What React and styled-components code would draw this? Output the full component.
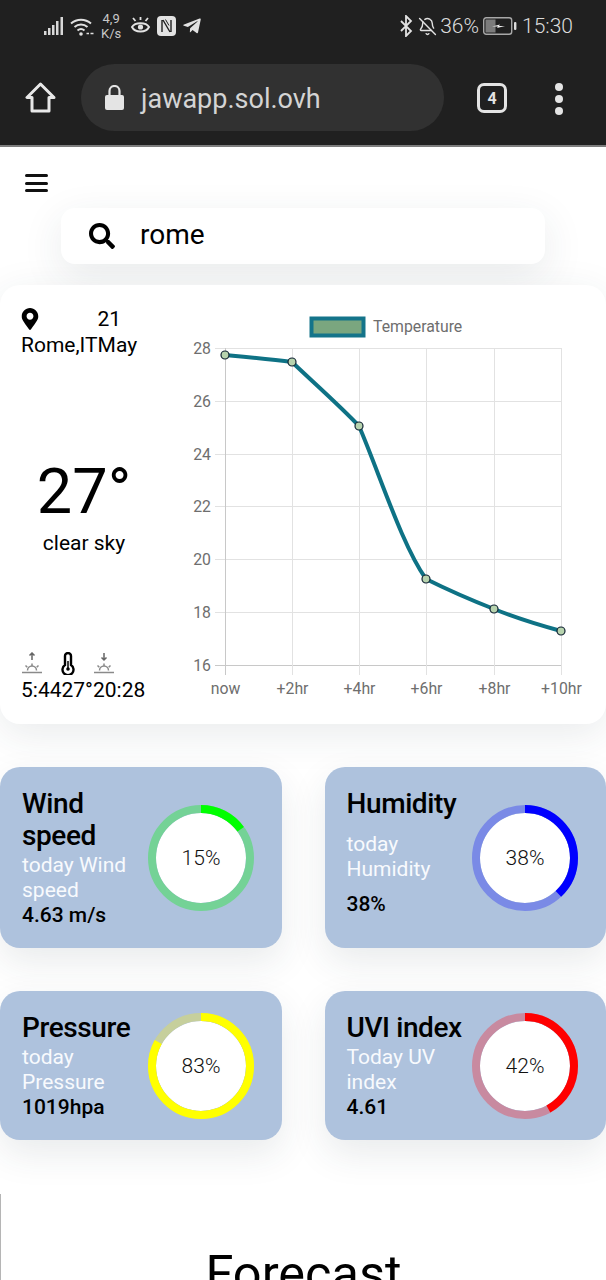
import React from 'react'
import styled, { createGlobalStyle } from 'styled-components'
import { FaSearch, FaMapMarkerAlt, FaTelegramPlane } from 'react-icons/fa'
import { BellOff } from 'lucide-react'

const GlobalStyle = createGlobalStyle`
    html, body {
        margin: 0;
        height: 1280px;
        overflow: hidden;
        background: #fff;
        font-family: Roboto, "Liberation Sans", sans-serif;
        color: #000;
    }
    * { box-sizing: border-box; }
`

const Page = styled.div`
    width: 606px;
    height: 1280px;
    overflow: hidden;
    display: flex;
    flex-direction: column;
`

const BrowserChrome = styled.header`
    height: 147px;
    flex: none;
    background: #202020;
    border-bottom: 2px solid #7d7d7d;
    color: #d6d6d6;
`

const StatusBar = styled.div`
    height: 52px;
    padding: 0 33px 0 44px;
    display: flex;
    align-items: center;
    justify-content: space-between;
`

const StatusGroup = styled.div`
    display: flex;
    align-items: center;
    gap: ${({ $gap }) => $gap || 6}px;
`

const NetSpeed = styled.div`
    font-size: 13px;
    line-height: 15px;
    text-align: center;
    margin: 0 3px 0 1px;
    color: #c8c8c8;
`

const StatusText = styled.span`
    font-size: ${({ $size }) => $size || 21}px;
    font-weight: 300;
    color: #dcdcdc;
    margin: 0 ${({ $right }) => $right || 0}px 0 ${({ $left }) => $left || 0}px;
`

const Toolbar = styled.div`
    height: 93px;
    padding: 12px 0 0 25px;
    display: flex;
    align-items: flex-start;
`

const HomeButton = styled.div`
    width: 31px;
    margin-top: 18px;
    line-height: 0;
`

const UrlPill = styled.div`
    margin-left: 25px;
    width: 363px;
    height: 67px;
    border-radius: 34px;
    background: #313131;
    display: flex;
    align-items: center;
    padding-left: 24px;
    gap: 17px;
    font-size: 27px;
    color: #d4d4d4;
`

const UrlText = styled.span`
    position: relative;
    top: 1px;
`

const TabCount = styled.div`
    margin: 19px 0 0 33px;
    width: 30px;
    height: 30px;
    border: 3px solid #e4e4e4;
    border-radius: 7px;
    display: flex;
    align-items: center;
    justify-content: center;
    font-size: 16px;
    font-weight: 700;
    color: #e4e4e4;
`

const MenuDots = styled.div`
    margin: 19px 0 0 48px;
    display: flex;
    flex-direction: column;
    gap: 4px;
`

const Dot = styled.i`
    display: block;
    width: 8px;
    height: 8px;
    border-radius: 50%;
    background: #e4e4e4;
`

const Burger = styled.div`
    margin: 27px 0 0 25px;
    width: 23px;
    display: flex;
    flex-direction: column;
    gap: 4.5px;
`

const BurgerBar = styled.i`
    display: block;
    height: 3px;
    border-radius: 2px;
    background: #111;
`

const SearchBox = styled.div`
    margin: 16px 0 0 61px;
    width: 484px;
    height: 56px;
    flex: none;
    background: #fff;
    border-radius: 14px;
    box-shadow: 0 12px 40px rgba(40, 60, 70, .1);
    display: flex;
    align-items: center;
    padding-left: 28px;
    gap: 25px;
    font-size: 28px;
`

const SearchText = styled.span`
    padding-bottom: 4px;
`

const WeatherCard = styled.section`
    margin-top: 21px;
    height: 439px;
    flex: none;
    background: #fff;
    border-radius: 20px;
    box-shadow: 0 10px 40px rgba(40, 60, 70, .1);
    display: flex;
`

const Summary = styled.div`
    width: 170px;
    flex: none;
    padding: 21px 0 21px 21px;
    display: flex;
    flex-direction: column;
    justify-content: space-between;
    font-size: 21px;
`

const PlaceRow = styled.div`
    display: flex;
    line-height: 26px;
`

const PlaceCol = styled.div`
    display: flex;
    flex-direction: column;
    align-items: flex-start;
`

const PinSlot = styled.div`
    height: 26px;
    line-height: 0;
    padding-top: 2px;
    margin-left: -2px;
`

const Current = styled.div`
    width: 126px;
    text-align: center;
`

const Degrees = styled.div`
    font-size: 63px;
    line-height: 76px;
`

const Condition = styled.div`
    font-size: 21px;
    line-height: 28px;
    margin-top: -1px;
`

const SunRow = styled.div`
    display: flex;
    align-items: flex-end;
    line-height: 26px;
`

const SunCol = styled.div`
    display: flex;
    flex-direction: column;
    align-items: flex-start;
`

const SunIcon = styled.div`
    height: 25px;
    line-height: 0;
    margin-left: ${({ $left }) => $left || 0}px;
`

const Chart = styled.svg`
    display: block;
    flex: 1;
    height: 439px;
`

const Cards = styled.div`
    margin-top: 43px;
    display: grid;
    grid-template-columns: 282px 1fr;
    column-gap: 42.5px;
    row-gap: 43px;
    flex: none;
`

const StatCard = styled.article`
    background: #aec2dd;
    border-radius: 20px;
    box-shadow: 0 14px 36px rgba(40, 60, 70, .1);
    padding: 21px 28px 20px 22px;
    display: flex;
    align-items: center;
`

const StatText = styled.div`
    flex: 1;
    min-width: 0;
    align-self: stretch;
    display: flex;
    flex-direction: column;
`

const StatTitle = styled.div`
    flex-grow: 1;
    font-size: 28px;
    font-weight: 500;
    line-height: 32px;
    letter-spacing: -.4px;
    margin-bottom: 1px;
`

const StatSub = styled.div`
    flex-grow: 1;
    font-size: 21px;
    line-height: 25px;
    color: #f8fafd;
`

const StatValue = styled.div`
    flex-grow: 1;
    font-size: 21px;
    font-weight: 500;
    line-height: 25px;
`

const Ring = styled.svg`
    display: block;
    flex: none;
`

const RingLabel = styled.text`
    font-size: 21px;
    font-weight: 300;
    fill: #111;
    text-anchor: middle;
    dominant-baseline: central;
`

const Forecast = styled.section`
    margin-top: 54px;
    flex: 1;
    border-left: 1px solid #b5b5b5;
    text-align: center;
    padding-top: 52px;
`

const ForecastTitle = styled.h2`
    margin: 0;
    font-size: 50.5px;
    font-weight: 400;
    line-height: 56px;
`

const AxisLabel = styled.text`
    font-size: 15.8px;
    fill: #6e6e6e;
    text-anchor: ${({ $anchor }) => $anchor || 'middle'};
`

const stats = [
    { title: 'Wind speed', sub: 'today Wind speed', value: '4.63 m/s', pct: 15, color: '#00ff00', track: '#74d296' },
    { title: 'Humidity', sub: 'today Humidity', value: '38%', pct: 38, color: '#0000ff', track: '#7a8ae6' },
    { title: 'Pressure', sub: 'today Pressure', value: '1019hpa', pct: 83, color: '#ffff00', track: '#c6cf9c' },
    { title: 'UVI index', sub: 'Today UV index', value: '4.61', pct: 42, color: '#ff0000', track: '#c88aa0' },
]

const yTicks = [
    { label: 28, y: 348.5 },
    { label: 26, y: 401.5 },
    { label: 24, y: 454.5 },
    { label: 22, y: 506.5 },
    { label: 20, y: 559.5 },
    { label: 18, y: 612.5 },
    { label: 16, y: 665.5 },
]

const xTicks = [
    { label: 'now', x: 225.5 },
    { label: '+2hr', x: 292.5 },
    { label: '+4hr', x: 359.5 },
    { label: '+6hr', x: 426.5 },
    { label: '+8hr', x: 494.5 },
    { label: '+10hr', x: 561.5 },
]

const points = [[225, 355], [292, 362], [359, 426], [426, 579], [494, 609], [561, 631]]

function Donut({ pct, color, track }) {
    const r = 49
    const len = 2 * Math.PI * r
    return (
        <Ring width="106" height="106" viewBox="0 0 106 106">
            <circle cx="53" cy="53" r="45" fill="#fff" />
            <circle cx="53" cy="53" r={r} fill="none" stroke={track} strokeWidth="8" />
            <circle
                cx="53"
                cy="53"
                r={r}
                fill="none"
                stroke={color}
                strokeWidth="8"
                strokeDasharray={`${(len * pct) / 100} ${len}`}
                transform="rotate(-90 53 53)"
            />
            <RingLabel x="53" y="53">{pct}%</RingLabel>
        </Ring>
    )
}

function SunIconSvg({ down }) {
    return (
        <svg width="22" height="22" viewBox="0 0 22 22" fill="none" stroke="#8a8a8a" strokeWidth="1.5">
            <path d="M1 20.5h20" />
            <path d="M6.5 18.5a4.5 4.5 0 0 1 9 0" />
            <path d="M11 11.5v2.5M4.5 13.5l1.8 1.8M17.5 13.5l-1.8 1.8" />
            {down ? <path d="M11 1v7M8.5 5.5 11 8l2.5-2.5" stroke="#666" /> : <path d="M11 8V1M8.5 3.5 11 1l2.5 2.5" stroke="#666" />}
        </svg>
    )
}

export default function App() {
    return (
        <Page>
            <GlobalStyle />
            <BrowserChrome>
                <StatusBar>
                    <StatusGroup>
                        <svg width="20" height="18" viewBox="0 0 20 18" fill="#d8d8d8">
                            <rect x="0" y="14" width="2.5" height="4" />
                            <rect x="4" y="11" width="2.5" height="7" />
                            <rect x="8" y="8" width="2.5" height="10" />
                            <rect x="12" y="4" width="2.5" height="14" />
                            <rect x="16.5" y="0" width="2.5" height="18" />
                        </svg>
                        <svg width="24" height="19" viewBox="0 0 24 19" fill="none" stroke="#e0e0e0" strokeWidth="2">
                            <path d="M1 6.5a15 15 0 0 1 20 0" />
                            <path d="M4.5 10a10 10 0 0 1 13 0" />
                            <path d="M7.5 13.5a5.5 5.5 0 0 1 7 0" />
                            <circle cx="11" cy="17" r="1.8" fill="#e0e0e0" stroke="none" />
                            <path d="M16.5 16.5h2.5M20.5 16.5h3" strokeWidth="1.4" />
                        </svg>
                        <NetSpeed>4,9<br />K/s</NetSpeed>
                        <svg width="21" height="20" viewBox="0 0 21 20" fill="none" stroke="#e2e2e2" strokeWidth="2">
                            <path d="M2 11c3-5 14-5 17 0-3 6-14 6-17 0Z" />
                            <circle cx="10.5" cy="11" r="2.6" fill="#e2e2e2" stroke="none" />
                            <path d="M3 2l2.5 3M10.5 1v3M18 2l-2.5 3" strokeWidth="1.8" />
                        </svg>
                        <svg width="19" height="20" viewBox="0 0 19 20">
                            <rect width="19" height="20" rx="4" fill="#e2e2e2" />
                            <path d="M5 4v12M14 4v12M6 4l7 12" fill="none" stroke="#202020" strokeWidth="1.4" />
                            <path d="M8.5 3.5 12 9.5" fill="none" stroke="#202020" strokeWidth="1" />
                        </svg>
                        <FaTelegramPlane size={20} color="#e2e2e2" />
                    </StatusGroup>
                    <StatusGroup $gap={5}>
                        <svg width="13" height="22" viewBox="0 0 13 22" fill="none" stroke="#e2e2e2" strokeWidth="1.8">
                            <path d="M1 6l10 10-5 5V1l5 5L1 16" />
                        </svg>
                        <BellOff size={19} color="#e2e2e2" strokeWidth={1.8} />
                        <StatusText $left={-2} $right={-1}>36%</StatusText>
                        <svg width="34" height="18" viewBox="0 0 34 18">
                            <rect x=".7" y=".7" width="28" height="16.6" rx="2.5" fill="none" stroke="#a8a8a8" strokeWidth="1.4" />
                            <rect x="2.5" y="2.5" width="10" height="13" fill="#7c7c7c" />
                            <path d="M9 9.5l8-2-1 1.5h6l-8 2 1-1.5Z" fill="#f0f0f0" />
                            <rect x="31" y="5" width="2.4" height="8" rx="1" fill="#dcdcdc" />
                        </svg>
                        <StatusText>15:30</StatusText>
                    </StatusGroup>
                </StatusBar>
                <Toolbar>
                    <HomeButton>
                        <svg width="31" height="31" viewBox="0 0 31 31" fill="none" stroke="#e8e8e8" strokeWidth="3" strokeLinejoin="round">
                            <path d="M15.5 2 2 15.5h5V29h17V15.5h5Z" />
                        </svg>
                    </HomeButton>
                    <UrlPill>
                        <svg width="19" height="25" viewBox="0 0 19 25" fill="#e4e4e4">
                            <path d="M2 10h15a2 2 0 0 1 2 2v11a2 2 0 0 1-2 2H2a2 2 0 0 1-2-2V12a2 2 0 0 1 2-2Z" />
                            <path d="M4.5 10V6a5 5 0 0 1 10 0v4" fill="none" stroke="#e4e4e4" strokeWidth="2.2" />
                        </svg>
                        <UrlText>jawapp.sol.ovh</UrlText>
                    </UrlPill>
                    <TabCount>4</TabCount>
                    <MenuDots>
                        <Dot />
                        <Dot />
                        <Dot />
                    </MenuDots>
                </Toolbar>
            </BrowserChrome>

            <Burger>
                <BurgerBar />
                <BurgerBar />
                <BurgerBar />
            </Burger>

            <SearchBox>
                <FaSearch size={26} color="#000" />
                <SearchText>rome</SearchText>
            </SearchBox>

            <WeatherCard>
                <Summary>
                    <PlaceRow>
                        <PlaceCol>
                            <PinSlot><FaMapMarkerAlt size={22} color="#000" /></PinSlot>
                            <span>Rome,IT</span>
                        </PlaceCol>
                        <PlaceCol>
                            <span>21</span>
                            <span>May</span>
                        </PlaceCol>
                    </PlaceRow>
                    <Current>
                        <Degrees>27°</Degrees>
                        <Condition>clear sky</Condition>
                    </Current>
                    <SunRow>
                        <SunCol>
                            <SunIcon><SunIconSvg /></SunIcon>
                            <span>5:44</span>
                        </SunCol>
                        <SunCol>
                            <SunIcon $left={-2}>
                                <svg width="16" height="23" viewBox="0 0 16 23" fill="none" stroke="#000" strokeWidth="2.4">
                                    <path d="M5 13V4a3 3 0 0 1 6 0v9a5.5 5.5 0 1 1-6 0Z" />
                                    <circle cx="8" cy="17" r="1.8" fill="#000" stroke="none" />
                                    <path d="M8 9v7" strokeWidth="1.5" />
                                </svg>
                            </SunIcon>
                            <span>27°</span>
                        </SunCol>
                        <SunCol>
                            <SunIcon><SunIconSvg down /></SunIcon>
                            <span>20:28</span>
                        </SunCol>
                    </SunRow>
                </Summary>
                <Chart viewBox="170 285 436 439">
                    <rect x="311.5" y="318.5" width="52" height="17" fill="#7aa67f" stroke="#14748a" strokeWidth="4" />
                    <AxisLabel x="373" y="332" $anchor="start">Temperature</AxisLabel>
                    {yTicks.map((t, i) => (
                        <g key={t.label}>
                            <line x1="215" x2="561.5" y1={t.y} y2={t.y} stroke={i === 6 ? '#c8c8c8' : '#e2e2e2'} />
                            <AxisLabel x="211" y={t.y + 5.5} $anchor="end">{t.label}</AxisLabel>
                        </g>
                    ))}
                    {xTicks.map((t, i) => (
                        <g key={t.label}>
                            <line x1={t.x} x2={t.x} y1="348" y2="675" stroke={i === 0 ? '#c8c8c8' : '#e2e2e2'} />
                            <AxisLabel x={t.x} y="694">{t.label}</AxisLabel>
                        </g>
                    ))}
                    <path
                        d="M225 355C247 357 270 359 292 362C315 384 338 404 359 426C380 475 402 545 426 579C448 590 471 600 494 609C516 618 539 625 561 631"
                        fill="none"
                        stroke="#0e7285"
                        strokeWidth="4"
                    />
                    {points.map(([x, y]) => (
                        <circle key={x} cx={x} cy={y} r="4" fill="#b7d3ae" stroke="#123" strokeWidth="1.2" />
                    ))}
                </Chart>
            </WeatherCard>

            <Cards>
                {stats.map((s) => (
                    <StatCard key={s.title}>
                        <StatText>
                            <StatTitle>{s.title}</StatTitle>
                            <StatSub>{s.sub}</StatSub>
                            <StatValue>{s.value}</StatValue>
                        </StatText>
                        <Donut pct={s.pct} color={s.color} track={s.track} />
                    </StatCard>
                ))}
            </Cards>

            <Forecast>
                <ForecastTitle>Forecast</ForecastTitle>
            </Forecast>
        </Page>
    )
}
